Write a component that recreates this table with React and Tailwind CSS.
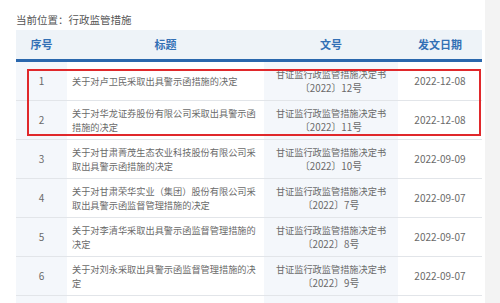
import React from "react";

const rows = [
  { no: 1, title: "关于对卢卫民采取出具警示函措施的决定", doc: "〔2022〕12号", date: "2022-12-08" },
  { no: 2, title: "关于对华龙证券股份有限公司采取出具警示函措施的决定", doc: "〔2022〕11号", date: "2022-12-08" },
  { no: 3, title: "关于对甘肃菁茂生态农业科技股份有限公司采取出具警示函措施的决定", doc: "〔2022〕10号", date: "2022-09-09" },
  { no: 4, title: "关于对甘肃荣华实业（集团）股份有限公司采取出具警示函监督管理措施的决定", doc: "〔2022〕7号", date: "2022-09-07" },
  { no: 5, title: "关于对李清华采取出具警示函监督管理措施的决定", doc: "〔2022〕8号", date: "2022-09-07" },
  { no: 6, title: "关于对刘永采取出具警示函监督管理措施的决定", doc: "〔2022〕9号", date: "2022-09-07" },
];

const font = { fontFamily: '"Noto Sans CJK SC", "Noto Sans", sans-serif' };

export default function App() {
  return (
    <div className="flex h-[303px] w-[500px] overflow-hidden bg-white" style={font}>
      <div className="w-[485px] pl-[16px] pr-[3px]">
        {/* breadcrumb */}
        <div className="pt-[13px] pb-[3px] text-[10.5px] leading-[14px] text-[#555]">
          当前位置：行政监管措施
        </div>

        <div className="relative">
          {/* header */}
          <div className="grid h-[29px] grid-cols-[51px_197px_134px_84px] items-center bg-[#eef3f8] text-[11px] font-bold text-[#3370b5]">
            <div className="text-center">序号</div>
            <div className="text-center">标题</div>
            <div className="text-center">文号</div>
            <div className="text-center">发文日期</div>
          </div>
          <div className="h-[3px] bg-[#2a67ad]" />

          {/* body */}
          {rows.map((r) => (
            <div
              key={r.no}
              className="grid h-[39px] grid-cols-[51px_197px_134px_84px] border-b border-[#e2e5e9] text-[9.2px] leading-[14px] text-[#6a6a6a]"
            >
              <div className="flex items-center justify-center bg-[#f4f7fb] text-[10px]">{r.no}</div>
              <div className="flex items-center pl-[5px] pr-[2px]">
                <span>{r.title}</span>
              </div>
              <div className="flex flex-col items-center justify-center bg-[#f4f7fb]">
                <span>甘证监行政监管措施决定书</span>
                <span className="text-[9.8px]">{r.doc}</span>
              </div>
              <div className="flex items-center justify-center text-[10px]">{r.date}</div>
            </div>
          ))}

          {/* next row, cut off by the window */}
          <div className="grid h-[39px] grid-cols-[51px_197px_134px_84px]">
            <div className="bg-[#f4f7fb]" />
            <div />
            <div className="bg-[#f4f7fb]" />
            <div />
          </div>

          {/* highlight box over rows 1-2 */}
          <div className="pointer-events-none absolute left-[11px] top-[39px] h-[67px] w-[454px] border-2 border-[#e0282b]" />
        </div>
      </div>
      <div className="flex-1 bg-[#f3f3f3]" />
    </div>
  );
}
